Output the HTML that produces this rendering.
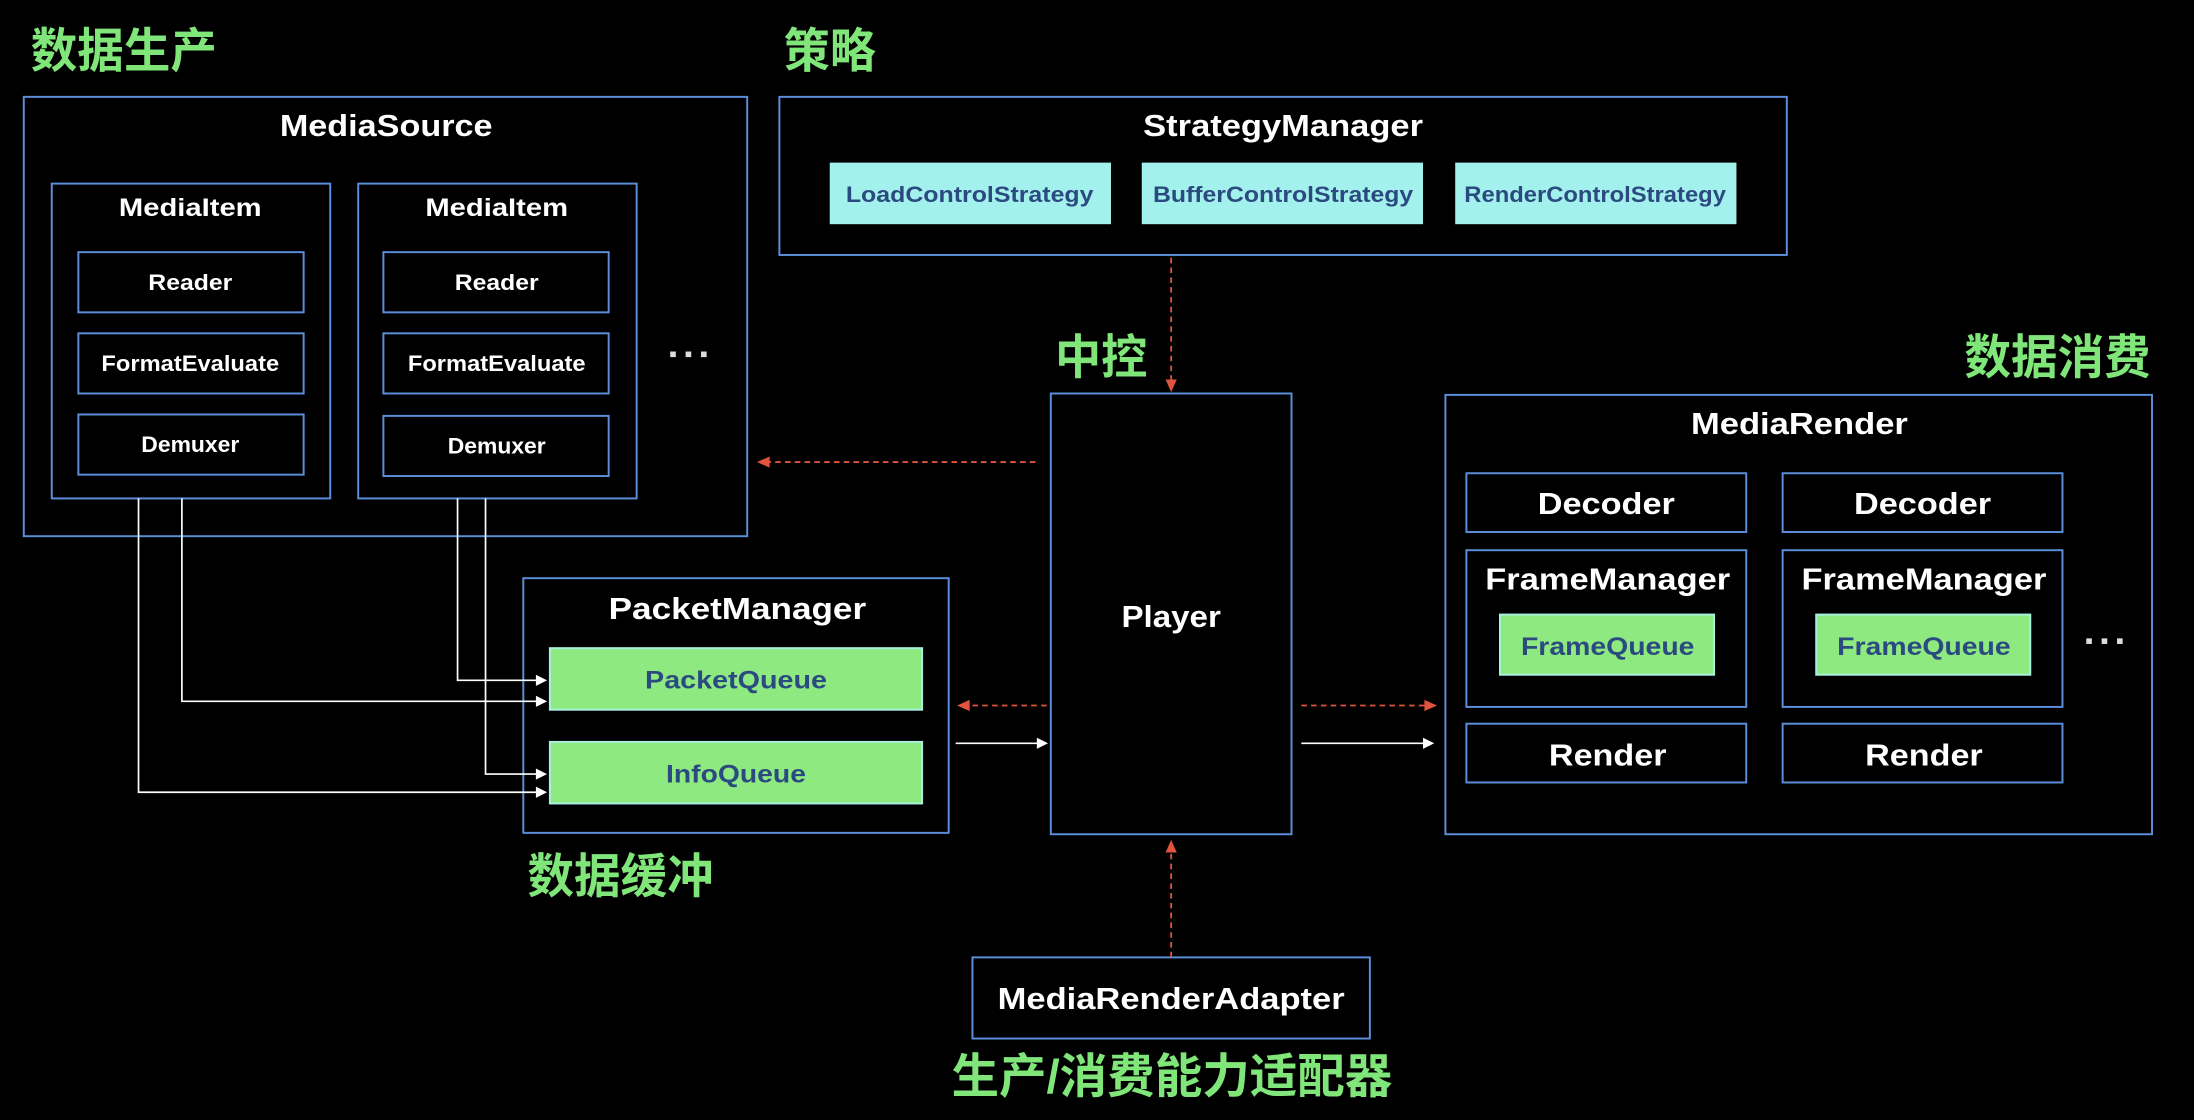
<!DOCTYPE html>
<html><head><meta charset="utf-8"><style>
html,body{margin:0;padding:0;background:#000;width:2194px;height:1120px;overflow:hidden}
svg{display:block}
text{font-family:"Liberation Sans",Arial,sans-serif;font-weight:bold;text-anchor:middle}
.w{fill:#fff}
.b{fill:#2b4a80}
.g{fill:#80e67a;font-family:"Liberation Sans","Noto Sans CJK SC",sans-serif;text-anchor:start}
.bx{fill:none;stroke:#5b8fdb;stroke-width:1.4}
.cy{fill:#a3f1ec}
.gr{fill:#8eea80;stroke:#a8f0e0;stroke-width:1.4}
.rd{stroke:#e0533f;stroke-width:1.3;stroke-dasharray:4 3;fill:none}
.wl{stroke:#fff;stroke-width:1.2;fill:none}
</style></head><body>
<svg width="2194" height="1120" viewBox="0 0 1568 800" xmlns="http://www.w3.org/2000/svg">
<rect width="1568" height="800" fill="#000"/>
<!-- labels -->
<text class="g" x="22" y="48" font-size="34" textLength="133" lengthAdjust="spacingAndGlyphs">数据生产</text>
<text class="g" x="560" y="48" font-size="34" textLength="66" lengthAdjust="spacingAndGlyphs">策略</text>
<text class="g" x="754" y="267" font-size="34" textLength="66" lengthAdjust="spacingAndGlyphs">中控</text>
<text class="g" x="1404" y="267" font-size="34" textLength="133" lengthAdjust="spacingAndGlyphs">数据消费</text>
<text class="g" x="377" y="638" font-size="34" textLength="133" lengthAdjust="spacingAndGlyphs">数据缓冲</text>
<text class="g" x="680" y="781" font-size="34" textLength="315" lengthAdjust="spacingAndGlyphs">生产/消费能力适配器</text>

<!-- MediaSource -->
<rect class="bx" x="17" y="69" width="517" height="314"/>
<text class="w" x="276" y="97" font-size="22" textLength="152" lengthAdjust="spacingAndGlyphs">MediaSource</text>
<g>
<rect class="bx" x="37" y="131" width="199" height="225"/>
<text class="w" x="136" y="154" font-size="18" textLength="102" lengthAdjust="spacingAndGlyphs">MediaItem</text>
<rect class="bx" x="56" y="180" width="161" height="43"/>
<text class="w" x="136" y="207" font-size="16" textLength="60" lengthAdjust="spacingAndGlyphs">Reader</text>
<rect class="bx" x="56" y="238" width="161" height="43"/>
<text class="w" x="136" y="265" font-size="16" textLength="127" lengthAdjust="spacingAndGlyphs">FormatEvaluate</text>
<rect class="bx" x="56" y="296" width="161" height="43"/>
<text class="w" x="136" y="323" font-size="16" textLength="70" lengthAdjust="spacingAndGlyphs">Demuxer</text>
</g>
<g transform="translate(219,0)">
<rect class="bx" x="37" y="131" width="199" height="225"/>
<text class="w" x="136" y="154" font-size="18" textLength="102" lengthAdjust="spacingAndGlyphs">MediaItem</text>
<rect class="bx" x="55" y="180" width="161" height="43"/>
<text class="w" x="136" y="207" font-size="16" textLength="60" lengthAdjust="spacingAndGlyphs">Reader</text>
<rect class="bx" x="55" y="238" width="161" height="43"/>
<text class="w" x="136" y="265" font-size="16" textLength="127" lengthAdjust="spacingAndGlyphs">FormatEvaluate</text>
<rect class="bx" x="55" y="297" width="161" height="43"/>
<text class="w" x="136" y="324" font-size="16" textLength="70" lengthAdjust="spacingAndGlyphs">Demuxer</text>
</g>
<g fill="#ddd"><rect x="479" y="251" width="4" height="4"/><rect x="490" y="251" width="4" height="4"/><rect x="501" y="251" width="4" height="4"/></g>

<!-- StrategyManager -->
<rect class="bx" x="557" y="69" width="720" height="113"/>
<text class="w" x="917" y="97" font-size="22" textLength="200" lengthAdjust="spacingAndGlyphs">StrategyManager</text>
<rect class="cy" x="593" y="116" width="201" height="44"/>
<text class="b" x="693" y="144" font-size="16" textLength="177" lengthAdjust="spacingAndGlyphs">LoadControlStrategy</text>
<rect class="cy" x="816" y="116" width="201" height="44"/>
<text class="b" x="917" y="144" font-size="16" textLength="186" lengthAdjust="spacingAndGlyphs">BufferControlStrategy</text>
<rect class="cy" x="1040" y="116" width="201" height="44"/>
<text class="b" x="1140" y="144" font-size="16" textLength="187" lengthAdjust="spacingAndGlyphs">RenderControlStrategy</text>

<!-- Player -->
<rect class="bx" x="751" y="281" width="172" height="315"/>
<text class="w" x="837" y="448" font-size="22" textLength="71" lengthAdjust="spacingAndGlyphs">Player</text>

<!-- PacketManager -->
<rect class="bx" x="374" y="413" width="304" height="182"/>
<text class="w" x="527" y="442" font-size="22" textLength="184" lengthAdjust="spacingAndGlyphs">PacketManager</text>
<rect class="gr" x="393" y="463" width="266" height="44"/>
<text class="b" x="526" y="492" font-size="18" textLength="130" lengthAdjust="spacingAndGlyphs">PacketQueue</text>
<rect class="gr" x="393" y="530" width="266" height="44"/>
<text class="b" x="526" y="559" font-size="18" textLength="100" lengthAdjust="spacingAndGlyphs">InfoQueue</text>

<!-- MediaRender -->
<rect class="bx" x="1033" y="282" width="505" height="314"/>
<text class="w" x="1286" y="310" font-size="22" textLength="155" lengthAdjust="spacingAndGlyphs">MediaRender</text>
<g>
<rect class="bx" x="1048" y="338" width="200" height="42"/>
<text class="w" x="1148" y="367" font-size="22" textLength="98" lengthAdjust="spacingAndGlyphs">Decoder</text>
<rect class="bx" x="1048" y="393" width="200" height="112"/>
<text class="w" x="1149" y="421" font-size="22" textLength="175" lengthAdjust="spacingAndGlyphs">FrameManager</text>
<rect class="gr" x="1072" y="439" width="153" height="43"/>
<text class="b" x="1149" y="468" font-size="18" textLength="124" lengthAdjust="spacingAndGlyphs">FrameQueue</text>
<rect class="bx" x="1048" y="517" width="200" height="42"/>
<text class="w" x="1149" y="547" font-size="22" textLength="84" lengthAdjust="spacingAndGlyphs">Render</text>
</g>
<g transform="translate(226,0)">
<rect class="bx" x="1048" y="338" width="200" height="42"/>
<text class="w" x="1148" y="367" font-size="22" textLength="98" lengthAdjust="spacingAndGlyphs">Decoder</text>
<rect class="bx" x="1048" y="393" width="200" height="112"/>
<text class="w" x="1149" y="421" font-size="22" textLength="175" lengthAdjust="spacingAndGlyphs">FrameManager</text>
<rect class="gr" x="1072" y="439" width="153" height="43"/>
<text class="b" x="1149" y="468" font-size="18" textLength="124" lengthAdjust="spacingAndGlyphs">FrameQueue</text>
<rect class="bx" x="1048" y="517" width="200" height="42"/>
<text class="w" x="1149" y="547" font-size="22" textLength="84" lengthAdjust="spacingAndGlyphs">Render</text>
</g>
<g fill="#ddd"><rect x="1491" y="456" width="4" height="4"/><rect x="1502" y="456" width="4" height="4"/><rect x="1513" y="456" width="4" height="4"/></g>

<!-- MediaRenderAdapter -->
<rect class="bx" x="695" y="684" width="284" height="58"/>
<text class="w" x="837" y="721" font-size="22" textLength="248" lengthAdjust="spacingAndGlyphs">MediaRenderAdapter</text>

<!-- red dashed arrows -->
<line class="rd" x1="837" y1="184" x2="837" y2="272"/>
<polygon points="833,271 841,271 837,280" fill="#e0533f"/>
<line class="rd" x1="740" y1="330" x2="549" y2="330"/>
<polygon points="550,326 550,334 541,330" fill="#e0533f"/>
<line class="rd" x1="748" y1="504" x2="692" y2="504"/>
<polygon points="693,500 693,508 684,504" fill="#e0533f"/>
<line class="rd" x1="930" y1="504" x2="1019" y2="504"/>
<polygon points="1018,500 1018,508 1027,504" fill="#e0533f"/>
<line class="rd" x1="837" y1="684" x2="837" y2="608"/>
<polygon points="833,609 841,609 837,600" fill="#e0533f"/>

<!-- white arrows -->
<line class="wl" x1="683" y1="531" x2="742" y2="531"/>
<polygon points="741,527 741,535 749,531" fill="#fff"/>
<line class="wl" x1="930" y1="531" x2="1018" y2="531"/>
<polygon points="1017,527 1017,535 1025,531" fill="#fff"/>

<polyline class="wl" points="99,356 99,566 384,566"/>
<polygon points="383,562 383,570 391,566" fill="#fff"/>
<polyline class="wl" points="130,356 130,501 384,501"/>
<polygon points="383,497 383,505 391,501" fill="#fff"/>
<polyline class="wl" points="327,356 327,486 384,486"/>
<polygon points="383,482 383,490 391,486" fill="#fff"/>
<polyline class="wl" points="347,356 347,553 384,553"/>
<polygon points="383,549 383,557 391,553" fill="#fff"/>
</svg>
</body></html>
